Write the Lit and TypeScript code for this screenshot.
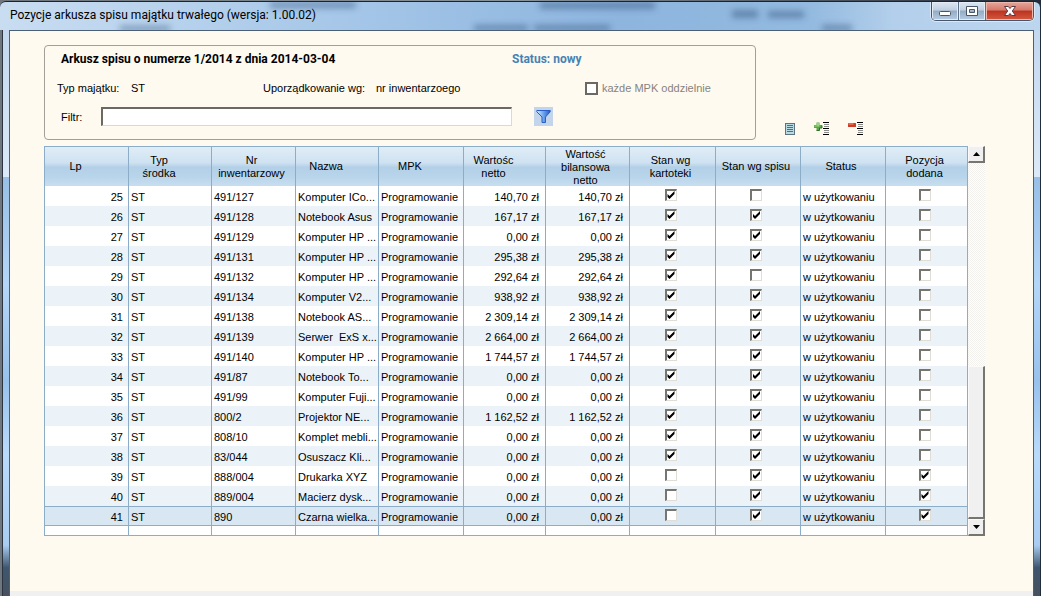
import { LitElement, html, css, svg } from "lit";
import { customElement, property } from "lit/decorators.js";
import { classMap } from "lit/directives/class-map.js";

interface Asset {
  lp: number;
  nr: string;
  name: string;
  value: string;
  inRegister: boolean;
  inSheet: boolean;
  added: boolean;
}

const asset = (
  lp: number, nr: string, name: string, value: string,
  inRegister = true, inSheet = true, added = false,
): Asset => ({ lp, nr, name, value, inRegister, inSheet, added });

const ASSETS: Asset[] = [
  asset(25, "491/127", "Komputer ICo...", "140,70 zł", true, false),
  asset(26, "491/128", "Notebook Asus", "167,17 zł"),
  asset(27, "491/129", "Komputer HP ...", "0,00 zł"),
  asset(28, "491/131", "Komputer HP ...", "295,38 zł"),
  asset(29, "491/132", "Komputer HP ...", "292,64 zł", true, false),
  asset(30, "491/134", "Komputer V2...", "938,92 zł"),
  asset(31, "491/138", "Notebook AS...", "2 309,14 zł"),
  asset(32, "491/139", "Serwer  ExS x...", "2 664,00 zł"),
  asset(33, "491/140", "Komputer HP ...", "1 744,57 zł"),
  asset(34, "491/87", "Notebook To...", "0,00 zł"),
  asset(35, "491/99", "Komputer Fuji...", "0,00 zł"),
  asset(36, "800/2", "Projektor NE...", "1 162,52 zł"),
  asset(37, "808/10", "Komplet mebli...", "0,00 zł"),
  asset(38, "83/044", "Osuszacz Kli...", "0,00 zł"),
  asset(39, "888/004", "Drukarka XYZ", "0,00 zł", false, true, true),
  asset(40, "889/004", "Macierz dysk...", "0,00 zł", false, true, true),
  asset(41, "890", "Czarna wielka...", "0,00 zł", false, true, true),
];

const COLUMNS: { lines: string[]; width: number; sortable?: boolean }[] = [
  { lines: ["Lp"], width: 85, sortable: true },
  { lines: ["Typ", "środka"], width: 83, sortable: true },
  { lines: ["Nr", "inwentarzowy"], width: 84 },
  { lines: ["Nazwa"], width: 83, sortable: true },
  { lines: ["MPK"], width: 85, sortable: true },
  { lines: ["Wartośc", "netto"], width: 82, sortable: true },
  { lines: ["Wartość", "bilansowa", "netto"], width: 84 },
  { lines: ["Stan wg", "kartoteki"], width: 86 },
  { lines: ["Stan wg spisu"], width: 85 },
  { lines: ["Status"], width: 85 },
  { lines: ["Pozycja", "dodana"], width: 82 },
];

const listLines = svg`
  <path d="M9 1.500h6M9 7.500h6M9 13.500h6" stroke="#000"/>
  <path d="M10 3.500h5M10 5.500h5M10 9.500h5M10 11.500h5" stroke="#8a8a86"/>`;

@customElement("title-bar")
class TitleBar extends LitElement {
  @property() heading = "";

  static styles = css`
    :host {
      display: block;
      height: 29px;
      overflow: hidden;
      position: relative;
      border-top: 1px solid #1b2230;
      border-radius: 6px 6px 0 0;
      box-sizing: border-box;
      background: linear-gradient(90deg, #c9ddf1 0, #b4d0ec 200px, #a0c3e6 400px, #8db5de 60%, #93badf 78%, #b3cfeb 86%, #bdd6ef 100%);
    }
    .ghosts {
      position: absolute;
      inset: 0;
      width: 100%;
      height: 100%;
    }
    .bar {
      position: relative;
      display: flex;
      justify-content: space-between;
      align-items: flex-start;
      padding: 0 6px 0 10px;
    }
    h1 {
      margin: 0;
      font: 12px/26px Roboto, sans-serif;
      color: #000;
      white-space: nowrap;
    }
    .buttons {
      display: flex;
      border: 1px solid #46556a;
      border-top: 0;
      border-radius: 0 0 5px 5px;
      box-shadow: 0 0 0 1px #dbe8f5;
      overflow: hidden;
    }
    button {
      width: 27px;
      height: 18px;
      padding: 0;
      border: 0;
      border-right: 1px solid #5d6f86;
      display: grid;
      place-items: center;
      background: linear-gradient(#dde7f2 0, #bfcfe0 45%, #94abc4 50%, #b5cce4 100%);
      box-shadow: inset 0 0 0 1px #e3edf7;
    }
    .close {
      width: 47px;
      border-right: 0;
      background: linear-gradient(#e5a79b 0, #d5796a 45%, #bb3320 50%, #d4593e 100%);
      box-shadow: inset 0 0 0 1px #eeb9ad;
    }
    svg {
      display: block;
    }
  `;

  render() {
    return html`
      <svg class="ghosts" aria-hidden="true">
        <defs><filter id="soft"><feGaussianBlur stdDeviation="3"/></filter></defs>
        <g filter="url(#soft)" fill="#3c5f89" opacity=".55">
          <rect x="270" y="0" width="86" height="6"/>
          <rect x="540" y="0" width="115" height="7"/>
          <rect x="474" y="23" width="54" height="6"/>
          <rect x="534" y="23" width="76" height="6"/>
          <rect x="732" y="8" width="26" height="8"/>
          <rect x="768" y="9" width="36" height="7"/>
          <rect x="822" y="23" width="30" height="6"/>
          <rect x="120" y="24" width="50" height="5"/>
        </g>
      </svg>
      <div class="bar">
        <h1>${this.heading}</h1>
        <div class="buttons">
          <button aria-label="Minimalizuj">
            <svg width="14" height="14" viewBox="0 0 14 14"><rect x="1.500" y="7.500" width="11" height="4" rx="1" fill="#fff" stroke="#4a5668"/></svg>
          </button>
          <button aria-label="Maksymalizuj">
            <svg width="14" height="14" viewBox="0 0 14 14"><path d="M1.500 2.500h11v9h-11z M4.500 5.500v3h5v-3z" fill="#fff" fill-rule="evenodd" stroke="#4a5668"/></svg>
          </button>
          <button class="close" aria-label="Zamknij">
            <svg width="14" height="14" viewBox="0 0 14 14"><path d="M1.500 2.500h3.800L7 4.500 8.700 2.500h3.800L9.300 7l3.200 4.500H8.700L7 9.500l-1.700 2H1.500L4.700 7z" fill="#fff" stroke="#5a3a44"/></svg>
          </button>
        </div>
      </div>`;
  }
}

@customElement("sheet-filter")
class SheetFilter extends LitElement {
  static styles = css`
    :host {
      display: block;
      font: 11px/20px "Liberation Sans", Arial, sans-serif;
      color: #000;
    }
    form {
      display: grid;
      grid-template-columns: 44px 30px 132px 113px 136px 73px 1fr;
      grid-auto-rows: 20px;
      row-gap: 9px;
      padding: 3px 12px 12px;
      border: 1px solid #a19f97;
      border-radius: 4px;
      white-space: nowrap;
    }
    h2, .status {
      margin: 0;
      font: bold 12px/20px Roboto, sans-serif;
    }
    h2 {
      grid-column: 1 / 6;
      padding-left: 4px;
    }
    .status {
      grid-column: 6 / 8;
      color: #4682b4;
    }
    .term {
      grid-column: span 2;
    }
    .separate {
      grid-column: 7;
      display: flex;
      align-items: center;
      gap: 4px;
      color: #85837d;
    }
    .separate input {
      appearance: none;
      box-sizing: border-box;
      width: 13px;
      height: 13px;
      margin: 0;
      border: 2px solid #6b6964;
      background: #fff;
    }
    .query-label {
      padding-left: 4px;
    }
    .query {
      grid-column: 2 / 6;
      box-sizing: border-box;
      width: 100%;
      height: 19px;
      padding: 0 4px;
      border: 1px solid #dcd9d1;
      border-top: 2px solid #6b6964;
      border-left: 2px solid #6b6964;
      background: #fff;
      font: inherit;
      outline: 0;
    }
    .apply {
      grid-column: 6;
      justify-self: start;
      margin-left: 22px;
      width: 19px;
      height: 19px;
      padding: 0;
      border: 0;
      display: grid;
      place-items: center;
      background: #c2d5ea;
    }
  `;

  render() {
    return html`
      <form @submit=${(e: Event) => e.preventDefault()}>
        <h2>Arkusz spisu o numerze 1/2014 z dnia 2014-03-04</h2>
        <div class="status">Status: nowy</div>
        <span class="term">Typ majątku:</span>
        <span>ST</span>
        <span>Uporządkowanie wg:</span>
        <span>nr inwentarzoego</span>
        <label class="separate"><input type="checkbox" disabled />każde MPK oddzielnie</label>
        <label class="query-label" for="query">Filtr:</label>
        <input class="query" id="query" type="text" />
        <button class="apply" aria-label="Filtruj">
          <svg width="15" height="15" viewBox="0 0 15 15">
            <defs><linearGradient id="funnel"><stop offset="0" stop-color="#d4eaff"/><stop offset=".5" stop-color="#6ba4ee"/><stop offset="1" stop-color="#2458c4"/></linearGradient></defs>
            <path d="M.8 1.500h13.400v1.300L9.500 8v5.500h-3.500V8L.8 2.800z" fill="url(#funnel)" stroke="#2a5fc9"/>
          </svg>
        </button>
      </form>`;
  }
}

@customElement("asset-table")
class AssetTable extends LitElement {
  @property({ attribute: false }) assets: Asset[] = [];
  @property({ type: Number }) selected = 0;

  static styles = css`
    :host {
      display: flex;
      font: 11px/13px "Liberation Sans", Arial, sans-serif;
      color: #000;
    }
    table {
      flex: 1;
      width: 100%;
      min-width: 0;
      table-layout: fixed;
      border-collapse: separate;
      border-spacing: 0;
      border: 1px solid #8badc8;
      border-width: 1px 0;
      background: #fff;
    }
    th, td {
      box-sizing: border-box;
      padding: 0 2px;
      border-right: 1px solid #8badc8;
      overflow: hidden;
      white-space: pre;
    }
    th:first-child, td:first-child {
      border-left: 1px solid #8badc8;
    }
    thead {
      background: linear-gradient(#e0edf7 0, #cfe2f1 40%, #b2d0e8 52%, #b8d4ea 75%, #c8deef 100%);
    }
    th {
      height: 39px;
      padding: 0 4px 0 0;
      font-weight: normal;
    }
    th.sortable {
      padding-right: 22px;
    }
    .caption {
      display: flex;
      flex-direction: column;
      justify-content: safe center;
      box-sizing: border-box;
      height: 37px;
      margin: 1px 0;
      overflow: hidden;
    }
    td {
      height: 20px;
      padding-top: 2px;
    }
    tbody tr:nth-child(even) {
      background: #ebf3f9;
    }
    tbody tr.selected {
      background: #d9e7f2;
    }
    .selected td {
      border-top: 1px solid #8badc8;
      border-bottom: 1px solid #8badc8;
    }
    tbody tr.rest {
      background: #fff;
    }
    .rest td {
      height: 9px;
      padding: 0;
    }
    .lp, .money {
      text-align: right;
    }
    .lp {
      padding-right: 5px;
    }
    .money {
      padding-right: 6px;
    }
    td.tick {
      padding: 0 6px 2px 2px;
      text-align: center;
    }
    .tick input {
      appearance: none;
      display: block;
      box-sizing: border-box;
      width: 12px;
      height: 12px;
      margin: 0 auto;
      border: 1px solid #e0ddd6;
      border-top: 2px solid #77756f;
      border-left: 2px solid #77756f;
      background: #fff;
    }
    .tick input:checked::before {
      content: "";
      display: block;
      width: 9px;
      height: 9px;
      background: #000;
      clip-path: polygon(1px 3px, 3px 5px, 8px 0, 8px 3px, 3px 8px, 1px 6px);
    }
    .scroll {
      display: flex;
      flex-direction: column;
      width: 17px;
      background: repeating-conic-gradient(#fff 0 25%, #f3f1ee 0 50%) 0 0 / 2px 2px;
    }
    .scroll button, .thumb {
      box-sizing: border-box;
      width: 17px;
      border: 1px solid #fbfaf8;
      border-right: 2px solid #77756f;
      border-bottom: 2px solid #77756f;
      background: #f0f0f0;
    }
    .scroll button {
      height: 17px;
      padding: 0;
      display: grid;
      place-items: center;
    }
    .track {
      flex: 1;
      display: flex;
      align-items: flex-end;
    }
    .thumb {
      height: 43%;
    }
    svg {
      display: block;
    }
  `;

  private tick(checked: boolean, label: string) {
    return html`<td class="tick"><input type="checkbox" .checked=${checked} aria-label=${label} /></td>`;
  }

  render() {
    return html`
      <table>
        <colgroup>${COLUMNS.map((c) => html`<col style="width:${c.width}px" />`)}</colgroup>
        <thead>
          <tr>
            ${COLUMNS.map((c) => html`<th scope="col" class=${classMap({ sortable: !!c.sortable })}><div class="caption">${c.lines.map((l) => html`<span>${l}</span>`)}</div></th>`)}
          </tr>
        </thead>
        <tbody>
          ${this.assets.map((a) => html`
            <tr class=${classMap({ selected: a.lp === this.selected })}>
              <td class="lp">${a.lp}</td>
              <td>ST</td>
              <td>${a.nr}</td>
              <td>${a.name}</td>
              <td>Programowanie</td>
              <td class="money">${a.value}</td>
              <td class="money">${a.value}</td>
              ${this.tick(a.inRegister, "Stan wg kartoteki")}
              ${this.tick(a.inSheet, "Stan wg spisu")}
              <td>w użytkowaniu</td>
              ${this.tick(a.added, "Pozycja dodana")}
            </tr>`)}
          <tr class="rest">${COLUMNS.map(() => html`<td></td>`)}</tr>
        </tbody>
      </table>
      <div class="scroll">
        <button aria-label="W górę"><svg width="7" height="4"><path d="M0 4 3.500 0 7 4z"/></svg></button>
        <div class="track"><div class="thumb"></div></div>
        <button aria-label="W dół"><svg width="7" height="4"><path d="M0 0h7L3.500 4z"/></svg></button>
      </div>`;
  }
}

@customElement("app-root")
class AppRoot extends LitElement {
  static styles = css`
    :host {
      display: flex;
      flex-direction: column;
      box-sizing: border-box;
      min-height: 100vh;
      padding-top: 1px;
      background: linear-gradient(90deg, #6f767e 0, #8a929a 50%, #222b38 100%);
    }
    .frame {
      flex: 1;
      display: flex;
      padding: 0 6px 0 6px;
      margin: 0 1px 0 2px;
      border-left: 1px solid #2b3542;
      box-sizing: border-box;
      background: linear-gradient(#c3d8ee 0, #dbe9f8 26%, #98bfe6 26%, #b4d6f8 45%, #98c2ec 62%, #b9dafb 75%, #a9cdf2 91%, #3f566e 95%, #46515e 100%);
    }
    title-bar {
      margin: 0 1px 0 0;
    }
    .client {
      flex: 1;
      min-width: 0;
      display: flex;
      flex-direction: column;
      border: 1px solid #4c6075;
      border-bottom: 0;
      background: #fffaf0;
    }
    main {
      flex: 1;
      padding: 14px 48px 12px 34px;
    }
    .top {
      display: flex;
      align-items: flex-end;
      margin-bottom: 6px;
    }
    sheet-filter {
      flex: 0 1 712px;
    }
    .tools {
      display: flex;
      gap: 18px;
      padding: 0 0 3px 24px;
    }
    .tools button {
      width: 16px;
      height: 16px;
      padding: 0;
      border: 0;
      background: none;
    }
    svg {
      display: block;
    }
    .statusbar {
      height: 5px;
      background: #f0f0f0;
    }
  `;

  render() {
    return html`
      <title-bar heading="Pozycje arkusza spisu majątku trwałego (wersja: 1.00.02)"></title-bar>
      <div class="frame">
        <div class="client">
          <main>
            <div class="top">
              <sheet-filter></sheet-filter>
              <div class="tools">
                <button aria-label="Szczegóły">
                  <svg width="16" height="16" viewBox="0 0 16 16"><rect x="5.500" y="2.500" width="9" height="11" fill="#b9dce4" stroke="#5f7480"/><path d="M7 4.500h6M7 6.500h6M7 8.500h6M7 10.500h6" stroke="#40748a"/></svg>
                </button>
                <button aria-label="Dodaj pozycję">
                  <svg width="16" height="16" viewBox="0 0 16 16">${listLines}<path d="M2.500 1.500h3v2.500h2.500v3h-2.500v2.500h-3v-2.500h-2.500v-3h2.500z" fill="#58a843"/><path d="M3 2h2v2.500H3zM.5 4.500h5v1h-5z" fill="#9ad480"/><path d="M5.500 7v2.500h-3M8 4.500v2.500h-2.500" fill="none" stroke="#2f6e2a"/></svg>
                </button>
                <button aria-label="Usuń pozycję">
                  <svg width="16" height="16" viewBox="0 0 16 16">${listLines}<rect x="0" y="2" width="8" height="4" rx=".5" fill="#cf3a25"/><path d="M.5 2.500h5v1h-5z" fill="#f09a84"/></svg>
                </button>
              </div>
            </div>
            <asset-table .assets=${ASSETS} .selected=${41}></asset-table>
          </main>
          <div class="statusbar"></div>
        </div>
      </div>`;
  }
}
